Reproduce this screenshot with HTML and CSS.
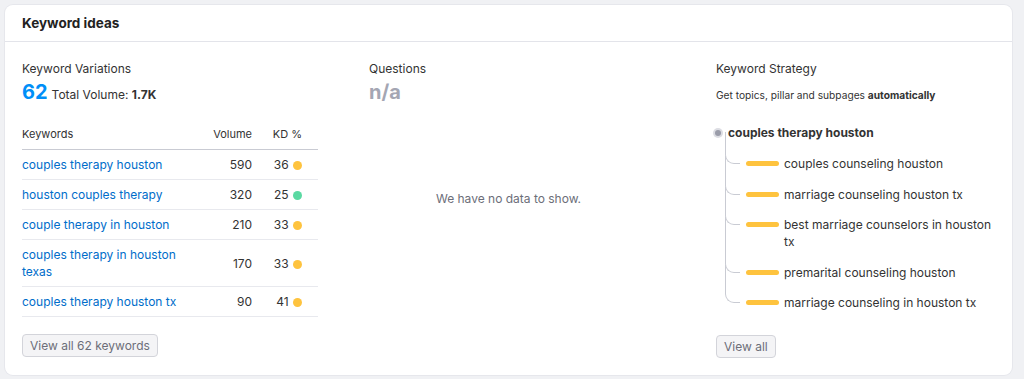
FILE: index.html
```html
<!DOCTYPE html>
<html>

<head>
    <link rel="stylesheet" href="styles.css">
</head>

<body>
    <div class="card">
        <div class="card-header">Keyword ideas</div>
        <div class="card-body">
            <div class="column">
                <div class="column-title">Keyword Variations</div>
                <div class="summary">
                    <span class="big-number">62</span>
                    <span class="summary-label">Total Volume: <b>1.7K</b></span>
                </div>
                <table class="keywords">
                    <thead>
                        <tr>
                            <th class="col-keyword">Keywords</th>
                            <th class="col-volume">Volume</th>
                            <th class="col-kd">KD %</th>
                        </tr>
                    </thead>
                    <tbody>
                        <tr>
                            <td class="col-keyword"><a href="#">couples therapy houston</a></td>
                            <td class="col-volume">590</td>
                            <td class="col-kd">36 <span class="dot yellow"></span></td>
                        </tr>
                        <tr>
                            <td class="col-keyword"><a href="#">houston couples therapy</a></td>
                            <td class="col-volume">320</td>
                            <td class="col-kd">25 <span class="dot green"></span></td>
                        </tr>
                        <tr>
                            <td class="col-keyword"><a href="#">couple therapy in houston</a></td>
                            <td class="col-volume">210</td>
                            <td class="col-kd">33 <span class="dot yellow"></span></td>
                        </tr>
                        <tr>
                            <td class="col-keyword"><a href="#">couples therapy in houston texas</a></td>
                            <td class="col-volume">170</td>
                            <td class="col-kd">33 <span class="dot yellow"></span></td>
                        </tr>
                        <tr>
                            <td class="col-keyword"><a href="#">couples therapy houston tx</a></td>
                            <td class="col-volume">90</td>
                            <td class="col-kd">41 <span class="dot yellow"></span></td>
                        </tr>
                    </tbody>
                </table>
                <button class="btn">View all 62 keywords</button>
            </div>

            <div class="column">
                <div class="column-title">Questions</div>
                <div class="summary">
                    <span class="big-number muted">n/a</span>
                </div>
                <div class="empty">We have no data to show.</div>
            </div>

            <div class="column">
                <div class="column-title">Keyword Strategy</div>
                <div class="strategy-note">Get topics, pillar and subpages <b>automatically</b></div>
                <div class="tree">
                    <div class="tree-root"><span class="root-dot"></span>couples therapy houston</div>
                    <ul class="tree-children">
                        <li><span class="bar"></span><span class="leaf">couples counseling houston</span></li>
                        <li><span class="bar"></span><span class="leaf">marriage counseling houston tx</span></li>
                        <li><span class="bar"></span><span class="leaf">best marriage counselors in houston tx</span></li>
                        <li><span class="bar"></span><span class="leaf">premarital counseling houston</span></li>
                        <li><span class="bar"></span><span class="leaf">marriage counseling in houston tx</span></li>
                    </ul>
                </div>
                <button class="btn">View all</button>
            </div>
        </div>
    </div>
</body>

</html>
```

FILE: styles.css
```css
body {
    margin: 0;
    background-color: #f0f1f4;
    font-family: Inter, 'Liberation Sans', sans-serif;
    font-size: 12px;
    color: #333;
}

.card {
    margin: 5px 12px 4px 5px;
    background-color: #fff;
    border-radius: 8px;
    box-shadow: 0 0 0 1px #e6e7ec;
}

.card-header {
    display: flex;
    align-items: center;
    height: 36px;
    padding: 0 17px;
    border-bottom: 1px solid #e3e4ea;
    font-size: 13.5px;
    font-weight: 700;
    color: #222;
}

.card-body {
    display: grid;
    grid-template-columns: repeat(3, 1fr);
    column-gap: 68px;
    padding: 18px 17px 17px 17px;
}

.column {
    display: flex;
    flex-direction: column;
    align-items: flex-start;
    min-width: 0;
}

.column-title {
    font-size: 12px;
    line-height: 17px;
}

.summary {
    display: flex;
    align-items: baseline;
    gap: 4px;
    height: 26px;
    margin-top: 3px;
}

.big-number {
    font-size: 20px;
    font-weight: 700;
    color: #008ff8;
}

.big-number.muted {
    color: #a4a6b3;
}

.summary-label b {
    font-weight: 700;
}

.keywords {
    width: calc(100% + 17px);
    margin-top: 14px;
    border-collapse: collapse;
}

.keywords th {
    padding: 6px 0 7px;
    font-size: 11px;
    font-weight: 400;
    line-height: 16px;
    border-bottom: 1px solid #c9cbd3;
}

.keywords td {
    padding: 6px 0 6px;
    line-height: 17px;
    border-bottom: 1px solid #e8e9ee;
    vertical-align: middle;
}

.keywords .col-keyword {
    text-align: left;
    width: 170px;
}

.keywords .col-volume {
    text-align: right;
}

.keywords .col-kd {
    text-align: right;
    padding-right: 16px;
    width: 50px;
    white-space: nowrap;
}

.keywords a {
    color: #006dca;
    text-decoration: none;
}

.dot {
    display: inline-block;
    width: 9px;
    height: 9px;
    margin-left: 1px;
    border-radius: 50%;
    vertical-align: -1px;
}

.dot.yellow {
    background-color: #fec33e;
}

.dot.green {
    background-color: #5ad9a2;
}

.btn {
    margin-top: 17px;
    height: 23px;
    padding: 0 7px;
    font-family: inherit;
    font-size: 12px;
    color: #6c6e79;
    background-color: #f4f4f6;
    border: 1px solid #d3d4da;
    border-radius: 4px;
}

.empty {
    align-self: stretch;
    margin-top: 85px;
    text-align: center;
    color: #6c6e79;
}

.strategy-note {
    margin-top: 10px;
    font-size: 10.2px;
    line-height: 17px;
}

.tree {
    margin-top: 20px;
    width: 100%;
}

.tree-root {
    display: flex;
    align-items: center;
    font-weight: 700;
    line-height: 17px;
}

.root-dot {
    width: 6px;
    height: 6px;
    margin: 0 7px 0 -1px;
    border-radius: 50%;
    background-color: #9a9ca9;
    box-shadow: 0 0 0 2px #dcdde3;
}

.tree-children {
    list-style: none;
    margin: 7px 0 0 9px;
    padding: 0;
}

.tree-children li {
    position: relative;
    display: flex;
    align-items: flex-start;
    padding: 7px 0 6.5px 21px;
    line-height: 17px;
}

.tree-children li::before {
    content: "";
    position: absolute;
    left: 0;
    top: 0;
    width: 14px;
    height: 15px;
    border-left: 1px solid #c9cbd3;
    border-bottom: 1px solid #c9cbd3;
    border-bottom-left-radius: 9px;
}

.tree-children li:first-child::before {
    top: -16px;
    height: 31px;
}

.tree-children li:not(:last-child)::after {
    content: "";
    position: absolute;
    left: 0;
    top: 8px;
    bottom: 0;
    border-left: 1px solid #c9cbd3;
}

.bar {
    flex: 0 0 33px;
    height: 5px;
    margin-top: 6px;
    margin-right: 5px;
    border-radius: 3px;
    background-color: #fec33e;
}
```
